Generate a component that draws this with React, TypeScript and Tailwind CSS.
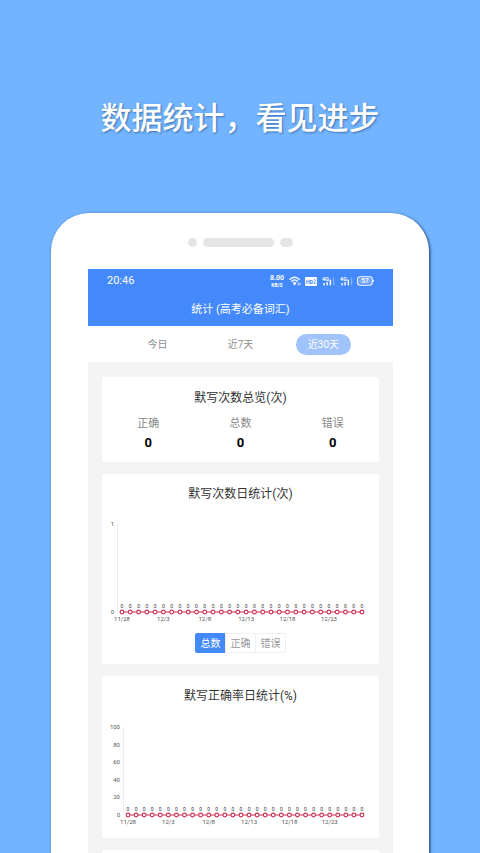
import { useState } from "react";

const RANGES = ["今日", "近7天", "近30天"];
const KINDS = ["总数", "正确", "错误"];

const SUMMARY = [
  { label: "正确", value: 0 },
  { label: "总数", value: 0 },
  { label: "错误", value: 0 },
];

// 11/28 起连续 30 天
const DAYS = Array.from({ length: 30 }, (_, i) => {
  const date = new Date(2021, 10, 28 + i);
  return { label: `${date.getMonth() + 1}/${date.getDate()}`, value: 0 };
});

function SignalIcon() {
  return (
    <svg viewBox="0 0 13 10" className="h-2.5 w-[13px]" fill="currentColor">
      <text x="0" y="5" fontSize="5.5" fontWeight="700">
        4G
      </text>
      <rect x="1.4" y="7" width="1.4" height="2.4" />
      <rect x="4.4" y="6" width="1.4" height="3.4" />
      <rect x="7.6" y="3.6" width="1.5" height="5.8" />
      <rect x="11" y="1.4" width="1.2" height="8" opacity="0.35" />
    </svg>
  );
}

function StatusBar() {
  return (
    <div className="flex h-6 items-center justify-between px-[19px]">
      <span className="text-[11px] leading-4">20:46</span>
      <div className="flex items-center">
        <div className="flex w-4 flex-col items-center font-bold">
          <span className="text-[7px] leading-[7px]">8.00</span>
          <span className="text-[5px] leading-[6px]">KB/S</span>
        </div>
        <svg viewBox="0 0 12 10" className="ml-1 h-2.5 w-3" fill="none" stroke="currentColor">
          <path d="M0.5 3.7Q5.6 -1.3 10.7 3.7M2.2 5.6Q5.6 2.2 9 5.6" strokeWidth="1.3" />
          <path d="M3.6 7.1Q5.6 5.1 7.6 7.1L5.6 9.4Z" fill="currentColor" stroke="none" />
          <path d="M9.4 9.4v-2.6M11 6.8v2.6" strokeWidth="0.8" />
        </svg>
        <svg viewBox="0 0 12 9" className="ml-1 h-[9px] w-3">
          <rect width="12" height="9" rx="1.2" fill="currentColor" />
          <text x="0.7" y="6.6" fontSize="5.5" fontWeight="700" fill="#4489fc">
            HD
          </text>
          <path
            d="M9 3.4Q9.2 2.2 10.1 2.4Q11.2 2.8 10.3 4.2L9 6.4H11.2"
            fill="none"
            stroke="#4489fc"
            strokeWidth="0.7"
          />
        </svg>
        <div className="ml-[5px] flex gap-[5px]">
          <SignalIcon />
          <SignalIcon />
        </div>
        <svg viewBox="0 0 17 10" className="ml-1 h-2.5 w-[17px]">
          <rect x="0.6" y="0.8" width="14.6" height="8.4" rx="2.6" fill="none" stroke="currentColor" strokeWidth="1.1" />
          <rect x="2" y="2.2" width="11.8" height="5.6" rx="1.4" fill="currentColor" opacity="0.3" />
          <path d="M15.6 3.4q1.3 0.2 1.3 1.6t-1.3 1.6z" fill="currentColor" />
          <text x="7.9" y="7.3" fontSize="6.5" fontWeight="500" textAnchor="middle" fill="currentColor">
            57
          </text>
        </svg>
      </div>
    </div>
  );
}

interface LineChartProps {
  name: string;
  ticks: number[];
  axisX: number;
}

function LineChart({ name, ticks, axisX }: LineChartProps) {
  const top = 14;
  const bottom = 102;
  const max = ticks[ticks.length - 1];
  const firstX = axisX + 4;
  const step = (260 - firstX) / (DAYS.length - 1);
  const toX = (i: number) => firstX + i * step;
  const toY = (v: number) => bottom - (v / max) * (bottom - top);
  const points = DAYS.map((d, i) => `${toX(i)},${toY(d.value)}`).join(" ");

  return (
    <svg viewBox="0 0 277 116" className="block w-full" role="img" aria-label={name}>
      <path d={`M${axisX - 0.5} ${top}V${bottom}`} stroke="#ececec" strokeWidth="1" />
      {ticks.map((t) => (
        <text key={t} x={axisX - 4} y={toY(t) + 2} fontSize="6" textAnchor="end" fill="#555">
          {t}
        </text>
      ))}
      <polyline points={points} fill="none" stroke="#c92f54" strokeWidth="1.2" />
      {DAYS.map((d, i) => (
        <g key={d.label}>
          <circle cx={toX(i)} cy={toY(d.value)} r="1.9" fill="#fff" stroke="#c92f54" strokeWidth="1.1" />
          <text x={toX(i)} y={toY(d.value) - 4} fontSize="5" textAnchor="middle" fill="#333">
            {d.value}
          </text>
          {i % 5 === 0 && (
            <text x={toX(i)} y={bottom + 9} fontSize="6" textAnchor="middle" fill="#555">
              {d.label}
            </text>
          )}
        </g>
      ))}
    </svg>
  );
}

export default function App() {
  const [range, setRange] = useState("近30天");
  const [kind, setKind] = useState("总数");

  return (
    <div className="h-screen overflow-hidden bg-[#72b4ff] font-['Roboto','Noto_Sans_CJK_SC',sans-serif]">
      <h1 className="pt-24 text-center text-[31px] leading-[46px] font-medium text-white [text-shadow:1px_1px_2px_rgba(30,70,120,0.6)]">
        数据统计，看见进步
      </h1>

      <div className="mx-[51px] mt-[71px] rounded-t-[38px] bg-white pr-9 pl-[37px] shadow-[1px_1px_3px_rgba(0,20,60,0.8)]">
        <div className="flex h-14 items-center justify-center gap-1.5 pt-0.5">
          <span className="size-[9px] rounded-full bg-[#e5e5e5]" />
          <span className="h-[9px] w-[71px] rounded-full bg-[#e5e5e5]" />
          <span className="h-[9px] w-[13px] rounded-full bg-[#e5e5e5]" />
        </div>

        <header className="bg-[#4489fc] text-white">
          <StatusBar />
          <h2 className="pt-px text-center text-[11px] leading-8">统计 (高考必备词汇)</h2>
        </header>

        <nav className="flex h-9 items-center justify-center gap-7">
          {RANGES.map((r) => (
            <button
              key={r}
              type="button"
              aria-pressed={range === r}
              onClick={() => setRange(r)}
              className={`h-[21px] w-[55px] rounded-full text-[10px] ${
                range === r ? "bg-[#a0c3fb] text-white" : "text-[#8c8c8c]"
              }`}
            >
              {r}
            </button>
          ))}
        </nav>

        <main className="flex flex-col gap-3 bg-[#f4f4f4] px-3.5 pt-[15px] pb-4 text-[#333]">
          <section className="rounded-xs bg-white pt-3 pb-[9px]">
            <h3 className="text-center text-xs leading-[18px]">默写次数总览(次)</h3>
            <dl className="mt-[9px] grid grid-cols-3 text-center">
              {SUMMARY.map((s) => (
                <div key={s.label}>
                  <dt className="text-[11px] leading-4 text-[#888]">{s.label}</dt>
                  <dd className="text-[13px] leading-[21px] font-bold text-black">{s.value}</dd>
                </div>
              ))}
            </dl>
          </section>

          <section className="rounded-xs bg-white pt-[11px] pb-[11px]">
            <h3 className="mb-[7px] text-center text-xs leading-[18px]">默写次数日统计(次)</h3>
            <LineChart name="默写次数日统计" ticks={[0, 1]} axisX={16} />
            <div className="mt-[7px] flex justify-center">
              {KINDS.map((k) => (
                <button
                  key={k}
                  type="button"
                  aria-pressed={kind === k}
                  onClick={() => setKind(k)}
                  className={`h-5 w-[31px] border text-[10px] not-first:-ml-px first:rounded-l-xs last:rounded-r-xs ${
                    kind === k ? "border-[#4489fc] bg-[#4489fc] text-white" : "border-[#efefef] text-[#999]"
                  }`}
                >
                  {k}
                </button>
              ))}
            </div>
          </section>

          <section className="rounded-xs bg-white pt-[11px] pb-[9px]">
            <h3 className="mb-2 text-center text-xs leading-[18px]">默写正确率日统计(%)</h3>
            <LineChart name="默写正确率日统计" ticks={[0, 20, 40, 60, 80, 100]} axisX={22} />
          </section>

          <section className="h-40 rounded-xs bg-white" />
        </main>
      </div>
    </div>
  );
}
